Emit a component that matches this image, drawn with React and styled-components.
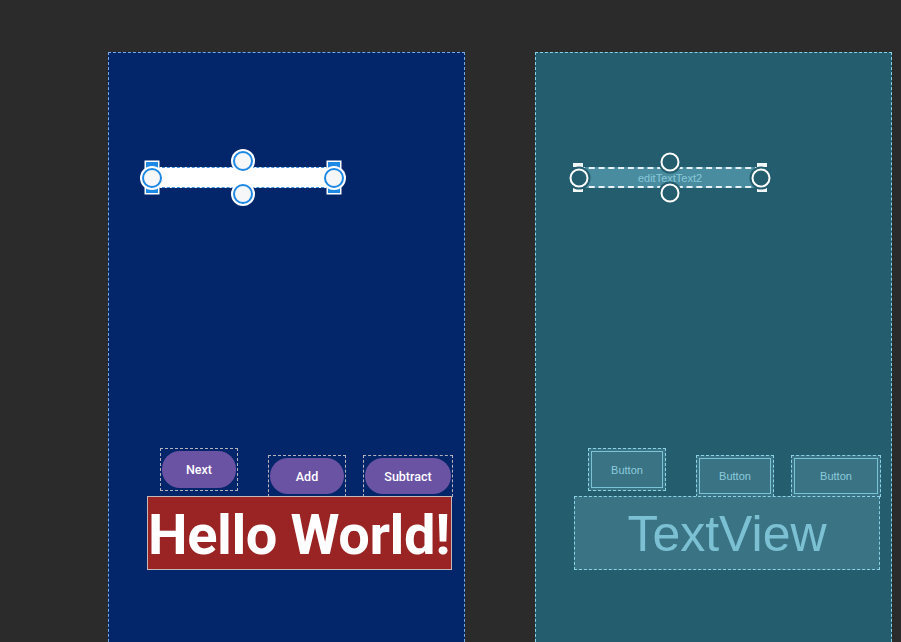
import React from 'react';
import styled, { createGlobalStyle, css } from 'styled-components';

const GlobalStyle = createGlobalStyle`
  html, body {
    margin: 0;
    padding: 0;
    background: #2b2b2c;
    overflow: hidden;
    font-family: Roboto, "Liberation Sans", sans-serif;
  }
`;

const Canvas = styled.div`
  display: flex;
  gap: 70px;
  padding: 52px 0 0 108px;
  height: 642px;
  box-sizing: border-box;
`;

const Screen = styled.div`
  flex: 0 0 auto;
  display: flex;
  flex-direction: column;
  align-items: flex-start;
  width: 357px;
  height: 620px;
  box-sizing: border-box;
  padding-top: 114px;
  border: 1px dashed ${p => (p.blueprint ? '#86d3e6' : '#73ace0')};
  background: ${p => (p.blueprint ? '#235d6e' : '#03256a')};
`;

const EditBar = styled.div`
  position: relative;
  box-sizing: border-box;
  width: 182px;
  height: 21px;
  margin-left: 43px;
  display: flex;
  align-items: center;
  justify-content: center;
  ${p =>
    p.blueprint
      ? css`
          background: #4a8c9f;
          border-top: 2px dashed #e6f2f5;
          border-bottom: 2px dashed #e6f2f5;
          color: #87c8d9;
          font-family: "Liberation Sans", Arial, sans-serif;
          font-size: 11px;
        `
      : css`
          background: #fff;
          border-top: 1px dashed #3d8fe0;
          border-bottom: 1px dashed #3d8fe0;
        `}
`;

// resize brackets and constraint anchors overlay the selected widget
const Bracket = styled.span`
  position: absolute;
  box-sizing: border-box;
  ${p => (p.right ? 'right: -6px;' : 'left: -6px;')}
  ${p =>
    p.blueprint
      ? css`
          top: -6px;
          bottom: -6px;
          width: 10px;
          border-top: 4px solid #f2f7f8;
          border-bottom: 4px solid #f2f7f8;
        `
      : css`
          top: -6px;
          bottom: -6px;
          width: 12px;
          background: #1e88e5;
          box-shadow: 0 0 0 1.5px #fff;
        `}
`;

const anchorSpots = {
  left: css`left: 0; top: 50%;`,
  right: css`left: 100%; top: 50%;`,
  top: css`left: 50%; top: -7px;`,
  bottom: css`left: 50%; top: calc(100% + 7px);`,
};

const Handle = styled.span`
  position: absolute;
  box-sizing: border-box;
  border-radius: 50%;
  transform: translate(-50%, -50%);
  ${p => anchorSpots[p.side]}
  ${p =>
    p.blueprint
      ? css`
          width: 19px;
          height: 19px;
          background: #235d6e;
          border: 2px solid #fff;
          box-shadow: 0 0 0 2px #235d6e;
        `
      : css`
          width: 20px;
          height: 20px;
          background: #f6f7f9;
          border: 2px solid #1e88e5;
          box-shadow: 0 0 0 2px #fff;
        `}
`;

const ButtonRow = styled.div`
  display: flex;
  align-items: flex-start;
  margin-top: 260px;
  padding-left: ${p => (p.blueprint ? 52 : 51)}px;
`;

const WidgetBox = styled.div`
  box-sizing: border-box;
  display: flex;
  width: ${p => p.w}px;
  height: ${p => p.h}px;
  margin-top: ${p => p.drop}px;
  margin-left: ${p => p.offset}px;
  ${p =>
    p.blueprint
      ? css`
          border: 1px dashed #8ad3e6;
          padding: 2px;
          background: #3a7384;
        `
      : css`
          border: 1px dashed #b4b4bc;
          padding: 2px 1px;
        `}
`;

const Pill = styled.div`
  flex: 1;
  border-radius: 18px;
  background: #6b53a4;
  color: #fff;
  font-size: 12.5px;
  font-weight: 500;
  display: flex;
  align-items: center;
  justify-content: center;
`;

const BlueInner = styled.div`
  flex: 1;
  border: 1px solid #7bc3d6;
  color: #8ccbdc;
  font-family: "Liberation Sans", Arial, sans-serif;
  font-size: 11px;
  display: flex;
  align-items: center;
  justify-content: center;
`;

const TextView = styled.div`
  box-sizing: border-box;
  display: flex;
  align-items: center;
  height: 74px;
  margin: -1px 0 0 38px;
  white-space: nowrap;
  overflow: hidden;
  ${p =>
    p.blueprint
      ? css`
          width: 306px;
          justify-content: center;
          border: 1px dashed #8ad3e6;
          background: #3a7384;
          color: #7cc1d3;
          font-family: "Liberation Sans", Arial, sans-serif;
          font-size: 50px;
          padding-top: 2px;
        `
      : css`
          width: 305px;
          justify-content: flex-start;
          border: 1px solid #c4b9b9;
          background: #9a2323;
          color: #fff;
          font-size: 56px;
          font-weight: 700;
          letter-spacing: -0.4px;
          padding: 4px 0 0 0;
        `}
`;

const buttons = [
  { label: 'Next', w: 78, h: 43, drop: 0, offset: 0 },
  { label: 'Add', w: 78, h: 42, drop: 7, offset: 30 },
  { label: 'Subtract', w: 90, h: 42, drop: 7, offset: 17 },
];

const EditText = ({ blueprint }) => (
  <EditBar blueprint={blueprint}>
    {blueprint && 'editTextText2'}
    <Bracket blueprint={blueprint} />
    <Bracket blueprint={blueprint} right />
    {['left', 'right', 'top', 'bottom'].map(side => (
      <Handle key={side} side={side} blueprint={blueprint} />
    ))}
  </EditBar>
);

const LayoutScreen = ({ blueprint }) => (
  <Screen blueprint={blueprint}>
    <EditText blueprint={blueprint} />
    <ButtonRow blueprint={blueprint}>
      {buttons.map(b => (
        <WidgetBox key={b.label} blueprint={blueprint} w={b.w} h={b.h} drop={b.drop} offset={b.offset}>
          {blueprint ? <BlueInner>Button</BlueInner> : <Pill>{b.label}</Pill>}
        </WidgetBox>
      ))}
    </ButtonRow>
    <TextView blueprint={blueprint}>{blueprint ? 'TextView' : 'Hello World!'}</TextView>
  </Screen>
);

export default function App() {
  return (
    <>
      <GlobalStyle />
      <Canvas>
        <LayoutScreen />
        <LayoutScreen blueprint />
      </Canvas>
    </>
  );
}
